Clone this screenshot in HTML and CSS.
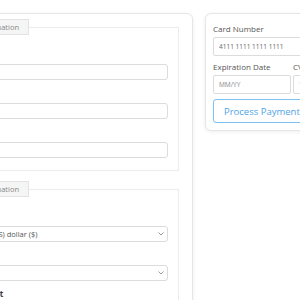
FILE: index.html
```
<!doctype html>
<html lang="en">
  <head>
    <meta charset="UTF-8" />
    <meta name="viewport" content="width=device-width, initial-scale=1.0" />
    <title>Checkout</title>
    <link rel="stylesheet" href="styles.css">
  </head>
  <body>
    <div class="checkout">
      <div class="card details">
        <fieldset class="group">
          <legend><span>Billing Information</span></legend>
          <div class="field">
            <label>Full Name</label>
            <input type="text">
          </div>
          <div class="field">
            <label>Email</label>
            <input type="text">
          </div>
          <div class="field">
            <label>Address</label>
            <input type="text">
          </div>
        </fieldset>

        <fieldset class="group">
          <legend><span>Payment Information</span></legend>
          <div class="field">
            <label>Currency</label>
            <div class="select">
              <select>
                <option>United States (US) dollar ($)</option>
              </select>
              <svg width="6" height="4" viewBox="0 0 6 4"><path d="M0.5 0.5 L3 3 L5.5 0.5" fill="none" stroke="#999" stroke-width="1"/></svg>
            </div>
          </div>
          <div class="field">
            <label>Method</label>
            <div class="select">
              <select>
                <option></option>
              </select>
              <svg width="6" height="4" viewBox="0 0 6 4"><path d="M0.5 0.5 L3 3 L5.5 0.5" fill="none" stroke="#999" stroke-width="1"/></svg>
            </div>
          </div>
          <div class="field">
            <label class="strong">Payment Amount</label>
          </div>
        </fieldset>
      </div>

      <div class="card pay">
        <label>Card Number</label>
        <input type="text" value="4111 1111 1111 1111">
        <div class="row">
          <div>
            <label>Expiration Date</label>
            <input type="text" placeholder="MM/YY">
          </div>
          <div>
            <label>CVV</label>
            <input type="text" value="123">
          </div>
        </div>
        <button>Process Payment</button>
      </div>
    </div>
  </body>
</html>
```

FILE: styles.css
```
body {
  margin: 0;
  background: #fff;
  font-family: "Open Sans", sans-serif;
  overflow: hidden;
}
.checkout {
  display: flex;
  align-items: flex-start;
  gap: 12px;
  padding-top: 13px;
  margin-left: -92px;
}
.card {
  background: #fff;
  border: 1px solid #e6e6e6;
  border-radius: 6px;
  box-shadow: 0 1px 4px rgba(0, 0, 0, .07);
  box-sizing: border-box;
  flex: none;
}
.details {
  width: 285px;
  padding: 5px 13px 20px;
}
.group {
  margin: 0;
  border: 1px solid #ececec;
  padding: 6px 10px 12px;
}
.group + .group {
  margin-top: 10px;
}
.group legend {
  box-sizing: border-box;
  width: 96px;
  height: 16px;
  padding: 0;
  background: #f5f5f5;
  border: 1px solid #e3e3e3;
}
.group legend span {
  display: block;
  padding-right: 9px;
  text-align: right;
  font-size: 7.5px;
  line-height: 14px;
  color: #888;
}
.field {
  margin-top: 7px;
}
.field label {
  display: block;
  font-size: 8px;
  line-height: 12px;
  margin-bottom: 4px;
  color: #555;
}
.field label.strong {
  font-weight: bold;
  color: #333;
}
.field input,
.select {
  box-sizing: border-box;
  width: 100%;
  height: 16px;
  border: 1px solid #dcdcdc;
  border-radius: 3px;
  background: #fff;
}
.field input {
  display: block;
  margin: 0;
  padding: 0 5px;
}
.select {
  display: flex;
  align-items: center;
  margin-top: 3px;
  padding-right: 3px;
}
.select select {
  flex: 1;
  min-width: 0;
  height: 14px;
  margin: 0;
  padding: 0 5px 0 8px;
  border: none;
  background: transparent;
  appearance: none;
  font-family: inherit;
  font-size: 7.5px;
  color: #555;
  outline: none;
}
.pay {
  width: 174px;
  padding: 7px 7px 7px 7px;
}
.pay label {
  display: block;
  font-size: 8px;
  line-height: 11px;
  margin: 2px 0 3px;
  color: #555;
}
.pay input {
  display: block;
  box-sizing: border-box;
  width: 100%;
  height: 19px;
  margin: 0 0 3px;
  padding: 0 5px;
  border: 1px solid #dcdcdc;
  border-radius: 2px;
  font-family: inherit;
  font-size: 6.5px;
  color: #666;
}
.pay input::placeholder {
  color: #888;
}
.row {
  display: grid;
  grid-template-columns: 1fr 1fr;
  gap: 2px;
}
.pay button {
  display: block;
  height: 24px;
  margin-top: 2px;
  padding: 0 10px;
  border: 1px solid #7dc0f2;
  border-radius: 3px;
  background: #fff;
  font-family: inherit;
  font-size: 9.5px;
  color: #4fa3e6;
}
```
